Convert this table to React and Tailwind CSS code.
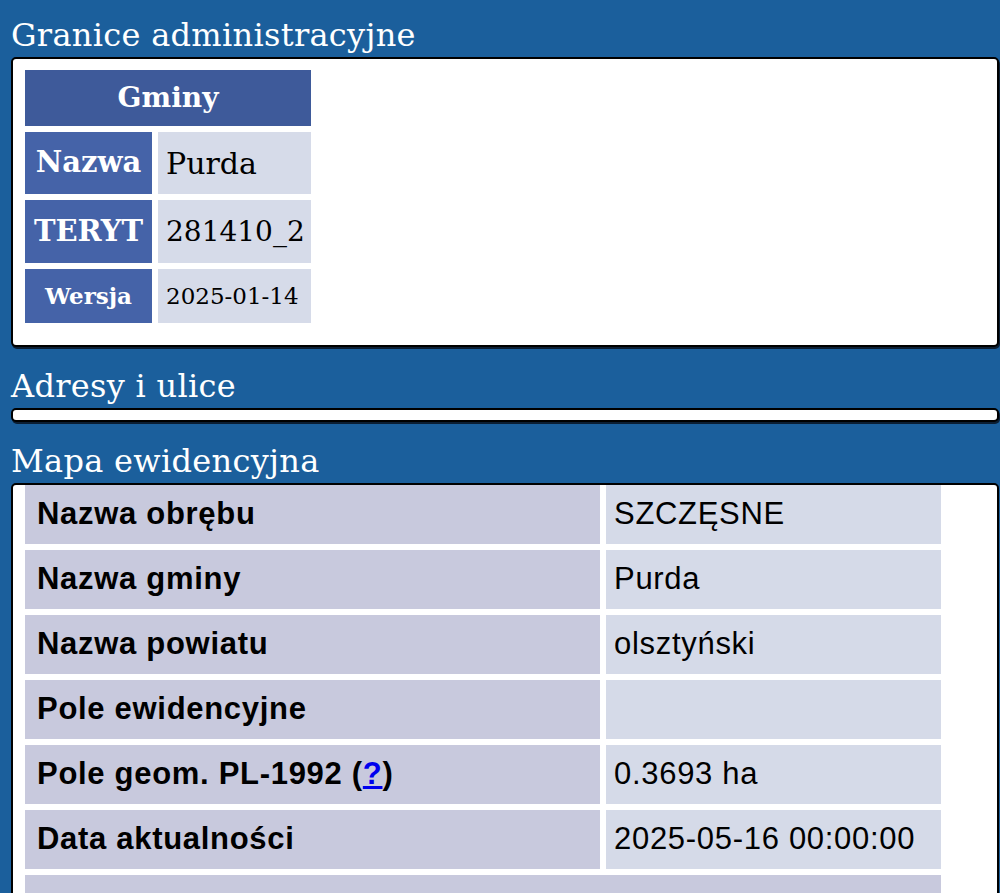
import React from "react";

const slab = { fontFamily: '"DejaVu Serif", "Liberation Serif", serif' };
const sans = { fontFamily: '"Liberation Sans", Arial, sans-serif' };

function Heading({ children, className = "" }) {
  return (
    <h2
      style={slab}
      className={`text-white text-[32px] leading-[38px] font-normal tracking-[0.3px] ${className}`}
    >
      {children}
    </h2>
  );
}

function GminyTable() {
  return (
    <div style={slab} className="grid grid-cols-[127px_153px] gap-[6px] w-[286px]">
      <div className="col-span-2 h-[56px] bg-[#3e5a9a] text-white font-bold text-[28px] flex items-center justify-center">
        Gminy
      </div>
      <div className="h-[62px] bg-[#4563a8] text-white font-bold text-[29px] flex items-center justify-center">
        Nazwa
      </div>
      <div className="h-[62px] bg-[#d6dbe9] text-black text-[30px] flex items-center pl-[8px]">
        Purda
      </div>
      <div className="h-[63px] bg-[#4563a8] text-white font-bold text-[29px] flex items-center justify-center">
        TERYT
      </div>
      <div className="h-[63px] bg-[#d6dbe9] text-black text-[28px] flex items-center pl-[8px]">
        281410_2
      </div>
      <div className="h-[54px] bg-[#4563a8] text-white font-bold text-[23px] flex items-center justify-center">
        Wersja
      </div>
      <div className="h-[54px] bg-[#d6dbe9] text-black text-[23px] flex items-center pl-[8px]">
        2025-01-14
      </div>
    </div>
  );
}

const rows = [
  { label: "Nazwa obrębu", value: "SZCZĘSNE" },
  { label: "Nazwa gminy", value: "Purda" },
  { label: "Nazwa powiatu", value: "olsztyński" },
  { label: "Pole ewidencyjne", value: "" },
  { label: "Pole geom. PL-1992", help: true, value: "0.3693 ha" },
  { label: "Data aktualności", value: "2025-05-16 00:00:00" },
];

function MapaTable() {
  return (
    <div style={sans} className="grid grid-cols-[575px_335px] gap-[6px] w-[916px]">
      {rows.map((r) => (
        <React.Fragment key={r.label}>
          <div className="h-[59px] bg-[#c8c9dd] text-black font-bold text-[31px] tracking-[0.7px] flex items-center pl-[12px]">
            <span>
              {r.label}
              {r.help && (
                <>
                  {" ("}
                  <a href="#" className="text-[#0000ee] underline">?</a>
                  {")"}
                </>
              )}
            </span>
          </div>
          <div className="h-[59px] bg-[#d5dae8] text-black text-[31px] tracking-[0.7px] flex items-center pl-[8px]">
            {r.value}
          </div>
        </React.Fragment>
      ))}
      <div className="col-span-2 h-[59px] bg-[#c8c9dd] text-black font-bold text-[31px] tracking-[0.7px] flex items-start pt-[10px] justify-center">
        Informacje o działce w ULDK
      </div>
    </div>
  );
}

export default function App() {
  return (
    <div className="bg-[#1b5f9c] h-[893px] overflow-hidden pl-[11px] pr-px">
      <Heading className="pt-[16px]">Granice administracyjne</Heading>
      <div className="mt-[3px] bg-white border-2 border-black rounded-[5px] shadow-[1px_2px_0_#0b1e33] pl-[12px] pt-[11px] pb-[22px]">
        <GminyTable />
      </div>
      <Heading className="mt-[20px]">Adresy i ulice</Heading>
      <div className="mt-[3px] h-[14px] bg-white border-2 border-black rounded-[5px] shadow-[1px_2px_0_#0b1e33]"></div>
      <Heading className="mt-[20px]">Mapa ewidencyjna</Heading>
      <div className="mt-[3px] bg-white border-2 border-black rounded-[5px] pl-[12px] pb-[20px]">
        <MapaTable />
      </div>
    </div>
  );
}
